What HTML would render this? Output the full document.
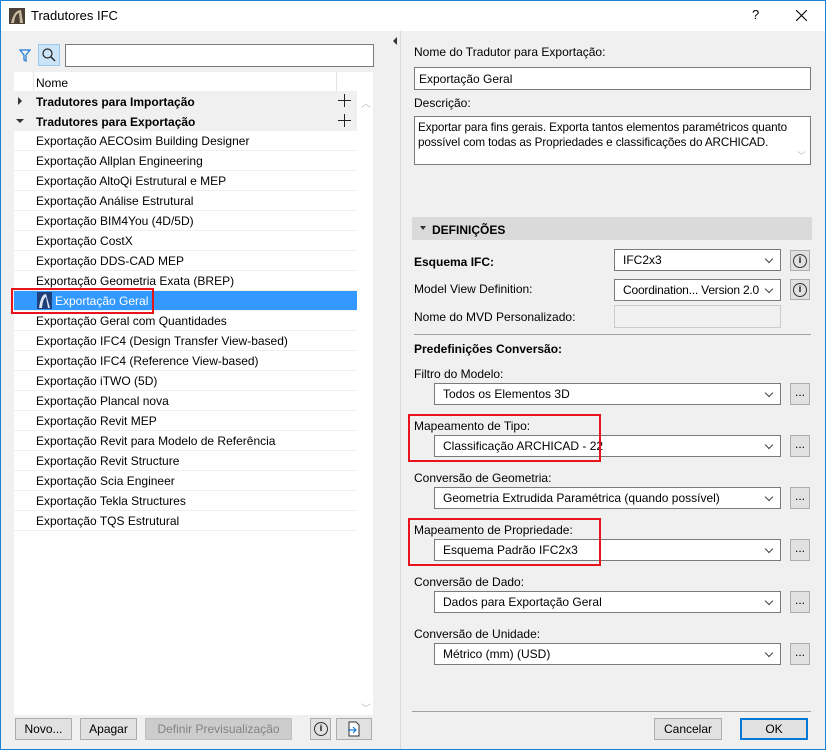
<!DOCTYPE html>
<html><head><meta charset="utf-8"><style>
*{box-sizing:border-box;margin:0;padding:0}
body{width:826px;height:750px;overflow:hidden;font-family:"Liberation Sans",sans-serif;font-size:12px;color:#000;background:#f0f0f0;position:relative}
.a{position:absolute}
.win{left:0;top:0;width:826px;height:750px;border:1px solid #1883d7}
.tb{left:1px;top:1px;width:824px;height:30px;background:#fff}
.list{left:14px;top:72px;width:359px;height:643px;background:#fff}
.row{position:absolute;left:14px;width:343px;height:20px;line-height:21px;padding-left:22px;border-bottom:1px solid #f0f0f0}
.sel{position:absolute;background:#fff;border:1px solid #7a7a7a;height:22px;line-height:21px;padding-left:8px}
.sel:after{content:"";position:absolute;right:8px;top:6px;width:5px;height:5px;border-right:1px solid #444;border-bottom:1px solid #444;transform:rotate(45deg)}
.btn{position:absolute;background:#e1e1e1;border:1px solid #adadad;text-align:center;line-height:20px;height:22px}
.dot{width:20px;left:790px;line-height:16px}
.lbl{position:absolute;left:414px}
.red{position:absolute;border:2px solid #e8141c}
.info{position:absolute;width:14px;height:14px;border:1.3px solid #333;border-radius:50%;font-size:9px;line-height:11px;text-align:center;font-weight:bold}
</style></head><body>
<div class="a win"></div>
<div class="a tb"></div>
<svg class="a" style="left:9px;top:8px" width="16" height="16"><rect width="16" height="16" fill="#4a4036"/><path d="M2 15 Q5 2 12 2 L14 15 L11 15 L10 5 Q6 6 5 15Z" fill="#c9b9a0"/></svg>
<div class="a" style="left:31px;top:8px;font-size:13px">Tradutores IFC</div>
<div class="a" style="left:752px;top:7px;font-size:13px">?</div>
<svg class="a" style="left:796px;top:10px" width="11" height="11"><path d="M0 0L11 11M11 0L0 11" stroke="#000" stroke-width="1.1"/></svg>

<!-- left -->
<svg class="a" style="left:19px;top:49px" width="12" height="13"><path d="M1 1H11L7 6V12L5 11V6Z" fill="none" stroke="#1c7ad6" stroke-width="1.2"/></svg>
<div class="a" style="left:38px;top:44px;width:22px;height:22px;background:#cce4f7;border:1px solid #99c9ef"></div>
<svg class="a" style="left:41px;top:47px" width="16" height="16"><circle cx="6.5" cy="6.5" r="4.5" fill="none" stroke="#222" stroke-width="1.2"/><path d="M10 10L14 14" stroke="#222" stroke-width="1.4"/></svg>
<div class="a" style="left:65px;top:44px;width:309px;height:23px;background:#fff;border:1px solid #7a7a7a"></div>
<div class="a list"></div>
<div class="a" style="left:33px;top:72px;width:1px;height:19px;background:#e5e5e5"></div>
<div class="a" style="left:336px;top:72px;width:1px;height:19px;background:#e5e5e5"></div>
<div class="a" style="left:36px;top:76px">Nome</div>
<div class="a" style="left:14px;top:91px;width:343px;height:40px;background:#f0f0f0"></div>
<div class="a" style="left:357px;top:91px;width:16px;height:624px;background:#fff"></div>
<div class="a" style="left:18px;top:97px;width:0;height:0;border-left:4px solid #333;border-top:4px solid transparent;border-bottom:4px solid transparent"></div>
<div class="a" style="left:16px;top:119px;width:0;height:0;border-top:4px solid #333;border-left:4px solid transparent;border-right:4px solid transparent"></div>
<div class="a" style="left:36px;top:95px;font-weight:bold">Tradutores para Importação</div>
<div class="a" style="left:36px;top:115px;font-weight:bold">Tradutores para Exportação</div>
<svg class="a" style="left:338px;top:94px" width="13" height="13"><path d="M6.5 0V13M0 6.5H13" stroke="#222"/></svg>
<svg class="a" style="left:338px;top:114px" width="13" height="13"><path d="M6.5 0V13M0 6.5H13" stroke="#222"/></svg>
<div class="a" style="left:361px;top:95px;color:#bbb;font-size:10px">︿</div>
<div class="a" style="left:361px;top:700px;color:#bbb;font-size:10px">﹀</div>

<div class="row" style="top:131px">Exportação AECOsim Building Designer</div>
<div class="row" style="top:151px">Exportação Allplan Engineering</div>
<div class="row" style="top:171px">Exportação AltoQi Estrutural e MEP</div>
<div class="row" style="top:191px">Exportação Análise Estrutural</div>
<div class="row" style="top:211px">Exportação BIM4You (4D/5D)</div>
<div class="row" style="top:231px">Exportação CostX</div>
<div class="row" style="top:251px">Exportação DDS-CAD MEP</div>
<div class="row" style="top:271px">Exportação Geometria Exata (BREP)</div>
<div class="row" style="top:291px;background:#3399ff;color:#fff;padding-left:41px">Exportação Geral</div>
<svg class="a" style="left:37px;top:292px" width="15" height="17"><rect width="15" height="17" fill="#1e3f78"/><path d="M2 16Q4 2 9 2L13 16H11L9 5Q6 6 5 16Z" fill="#dfe6f3"/></svg>
<div class="row" style="top:311px">Exportação Geral com Quantidades</div>
<div class="row" style="top:331px">Exportação IFC4 (Design Transfer View-based)</div>
<div class="row" style="top:351px">Exportação IFC4 (Reference View-based)</div>
<div class="row" style="top:371px">Exportação iTWO (5D)</div>
<div class="row" style="top:391px">Exportação Plancal nova</div>
<div class="row" style="top:411px">Exportação Revit MEP</div>
<div class="row" style="top:431px">Exportação Revit para Modelo de Referência</div>
<div class="row" style="top:451px">Exportação Revit Structure</div>
<div class="row" style="top:471px">Exportação Scia Engineer</div>
<div class="row" style="top:491px">Exportação Tekla Structures</div>
<div class="row" style="top:511px">Exportação TQS Estrutural</div>
<div class="red" style="left:11px;top:288px;width:143px;height:26px"></div>

<div class="btn" style="left:15px;top:718px;width:57px">Novo...</div>
<div class="btn" style="left:80px;top:718px;width:57px">Apagar</div>
<div class="btn" style="left:145px;top:718px;width:147px;background:#ccc;border-color:#bfbfbf;color:#838383">Definir Previsualização</div>
<div class="btn" style="left:310px;top:718px;width:21px"></div>
<div class="info" style="left:314px;top:722px">i</div>
<div class="btn" style="left:336px;top:718px;width:36px"></div>
<svg class="a" style="left:347px;top:721px" width="14" height="16"><path d="M2 1H9L12 4V15H2Z" fill="#fff" stroke="#333"/><path d="M1 9H8M6 6L9 9L6 12" fill="none" stroke="#1c7ad6" stroke-width="1.2"/></svg>

<!-- splitter -->
<div class="a" style="left:393px;top:37px;width:0;height:0;border-right:4px solid #333;border-top:4px solid transparent;border-bottom:4px solid transparent"></div>
<div class="a" style="left:400px;top:31px;width:1px;height:718px;background:#d9d9d9"></div>

<!-- right -->
<div class="lbl" style="top:45px">Nome do Tradutor para Exportação:</div>
<div class="a" style="left:414px;top:67px;width:397px;height:23px;background:#fff;border:1px solid #7a7a7a;padding:4px 0 0 4px">Exportação Geral</div>
<div class="lbl" style="top:96px">Descrição:</div>
<div class="a" style="left:414px;top:116px;width:397px;height:49px;background:#fff;border:1px solid #7a7a7a;padding:3px 0 0 3px;line-height:15px;font-size:11.7px;letter-spacing:-0.1px">Exportar para fins gerais. Exporta tantos elementos paramétricos quanto<br>possível com todas as Propriedades e classificações do ARCHICAD.</div>
<div class="a" style="left:797px;top:149px;color:#bbb;font-size:9px">﹀</div>

<div class="a" style="left:412px;top:217px;width:400px;height:23px;background:#dadada;border-radius:2px"></div>
<div class="a" style="left:420px;top:226px;width:0;height:0;border-top:4px solid #333;border-left:3.5px solid transparent;border-right:3.5px solid transparent"></div>
<div class="a" style="left:432px;top:223px;font-weight:bold">DEFINIÇÕES</div>

<div class="lbl" style="top:255px;font-weight:bold">Esquema IFC:</div>
<div class="sel" style="left:614px;top:249px;width:167px">IFC2x3</div>
<div class="btn" style="left:790px;top:250px;width:20px;height:21px"></div><div class="info" style="left:793px;top:254px">i</div>
<div class="lbl" style="top:282px">Model View Definition:</div>
<div class="sel" style="left:614px;top:279px;width:167px;letter-spacing:-0.2px">Coordination... Version 2.0</div>
<div class="btn" style="left:790px;top:279px;width:20px;height:21px"></div><div class="info" style="left:793px;top:283px">i</div>
<div class="lbl" style="top:310px">Nome do MVD Personalizado:</div>
<div class="a" style="left:614px;top:305px;width:167px;height:23px;background:#f0f0f0;border:1px solid #ccc"></div>
<div class="a" style="left:414px;top:334px;width:397px;height:1px;background:#a0a0a0"></div>
<div class="lbl" style="top:342px;font-weight:bold">Predefinições Conversão:</div>

<div class="lbl" style="top:367px">Filtro do Modelo:</div>
<div class="sel" style="left:434px;top:383px;width:347px">Todos os Elementos 3D</div>
<div class="btn dot" style="top:383px">...</div>
<div class="lbl" style="top:419px">Mapeamento de Tipo:</div>
<div class="sel" style="left:434px;top:435px;width:347px">Classificação ARCHICAD - 22</div>
<div class="btn dot" style="top:435px">...</div>
<div class="lbl" style="top:471px">Conversão de Geometria:</div>
<div class="sel" style="left:434px;top:487px;width:347px">Geometria Extrudida Paramétrica (quando possível)</div>
<div class="btn dot" style="top:487px">...</div>
<div class="lbl" style="top:523px">Mapeamento de Propriedade:</div>
<div class="sel" style="left:434px;top:539px;width:347px">Esquema Padrão IFC2x3</div>
<div class="btn dot" style="top:539px">...</div>
<div class="lbl" style="top:575px">Conversão de Dado:</div>
<div class="sel" style="left:434px;top:591px;width:347px">Dados para Exportação Geral</div>
<div class="btn dot" style="top:591px">...</div>
<div class="lbl" style="top:627px">Conversão de Unidade:</div>
<div class="sel" style="left:434px;top:643px;width:347px">Métrico (mm) (USD)</div>
<div class="btn dot" style="top:643px">...</div>
<div class="red" style="left:408px;top:414px;width:193px;height:48px"></div>
<div class="red" style="left:408px;top:518px;width:193px;height:48px"></div>

<div class="a" style="left:412px;top:711px;width:399px;height:1px;background:#a0a0a0"></div>
<div class="btn" style="left:654px;top:718px;width:68px">Cancelar</div>
<div class="btn" style="left:740px;top:718px;width:68px;border:2px solid #0078d7;line-height:18px">OK</div>
</body></html>
